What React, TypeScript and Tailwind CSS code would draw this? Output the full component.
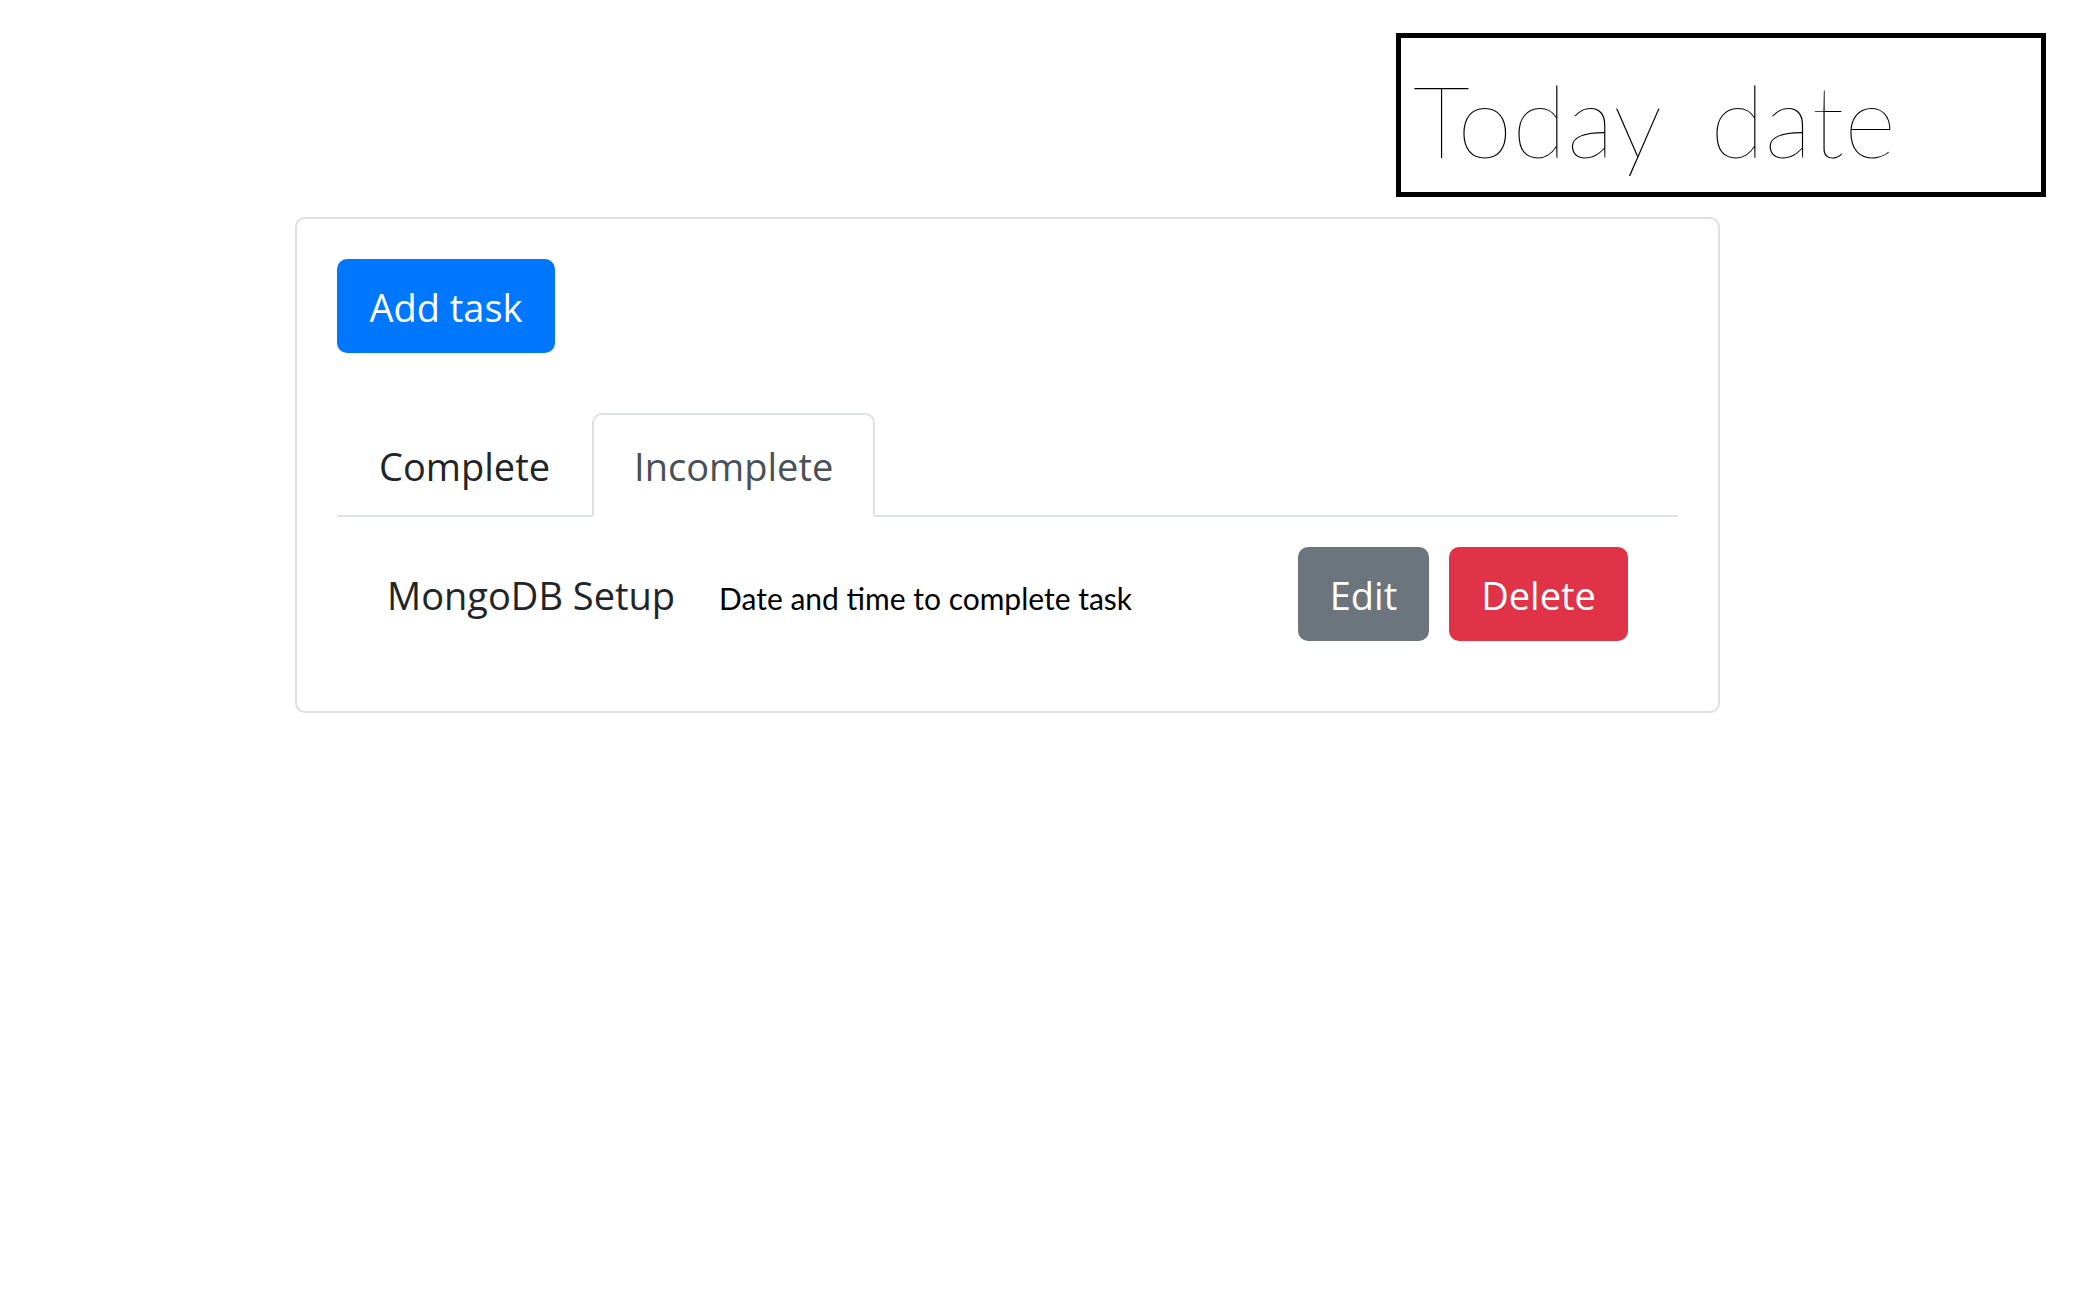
import { useState } from "react";

const button =
  "h-[94px] rounded-[10px] pt-0.5 text-center text-[38px] text-white cursor-pointer";

const tabs = ["Complete", "Incomplete"];

export default function App() {
  const [active, setActive] = useState("Incomplete");

  return (
    <div className="min-h-screen bg-white pt-[33px] font-['Open_Sans','Noto_Sans',sans-serif] text-[#212529]">
      <header className="flex justify-end pr-[27px]">
        <h1 className="flex h-[164px] w-[650px] items-center gap-12 border-[5px] border-black pt-2 pl-3 font-['Lato',sans-serif] text-[100px] font-thin text-black">
          <span>Today</span>
          <span>date</span>
        </h1>
      </header>

      <main className="mt-5 mr-[353px] ml-[295px] rounded-[10px] border-2 border-[#dfdfdf] px-10 pt-10 pb-[70px]">
        <button type="button" className={`${button} w-[218px] bg-[#0077ff]`}>
          Add task
        </button>

        <div role="tablist" className="mt-[60px] flex border-b-2 border-[#dee2e6]">
          {tabs.map((tab) => (
            <button
              key={tab}
              type="button"
              role="tab"
              aria-selected={tab === active}
              onClick={() => setActive(tab)}
              className={
                tab === active
                  ? "-mb-0.5 h-[104px] cursor-pointer rounded-t-[10px] border-2 border-[#dee2e6] border-b-white px-10 pt-0.5 text-[38px] text-[#495057]"
                  : "-mb-0.5 h-[104px] cursor-pointer border-2 border-transparent px-10 pt-0.5 text-[38px]"
              }
            >
              {tab}
            </button>
          ))}
        </div>

        <section className="mt-[30px] flex items-center px-[50px]">
          <h2 className="pt-0.5 text-[38px]">MongoDB Setup</h2>
          <p className="ml-11 pt-2 font-['Lato',sans-serif] text-[30px] text-black">
            Date and time to complete task
          </p>
          <div className="ml-auto flex gap-5">
            <button type="button" className={`${button} w-[131px] bg-[#6c757d]`}>
              Edit
            </button>
            <button type="button" className={`${button} w-[179px] bg-[#e03347]`}>
              Delete
            </button>
          </div>
        </section>
      </main>
    </div>
  );
}
